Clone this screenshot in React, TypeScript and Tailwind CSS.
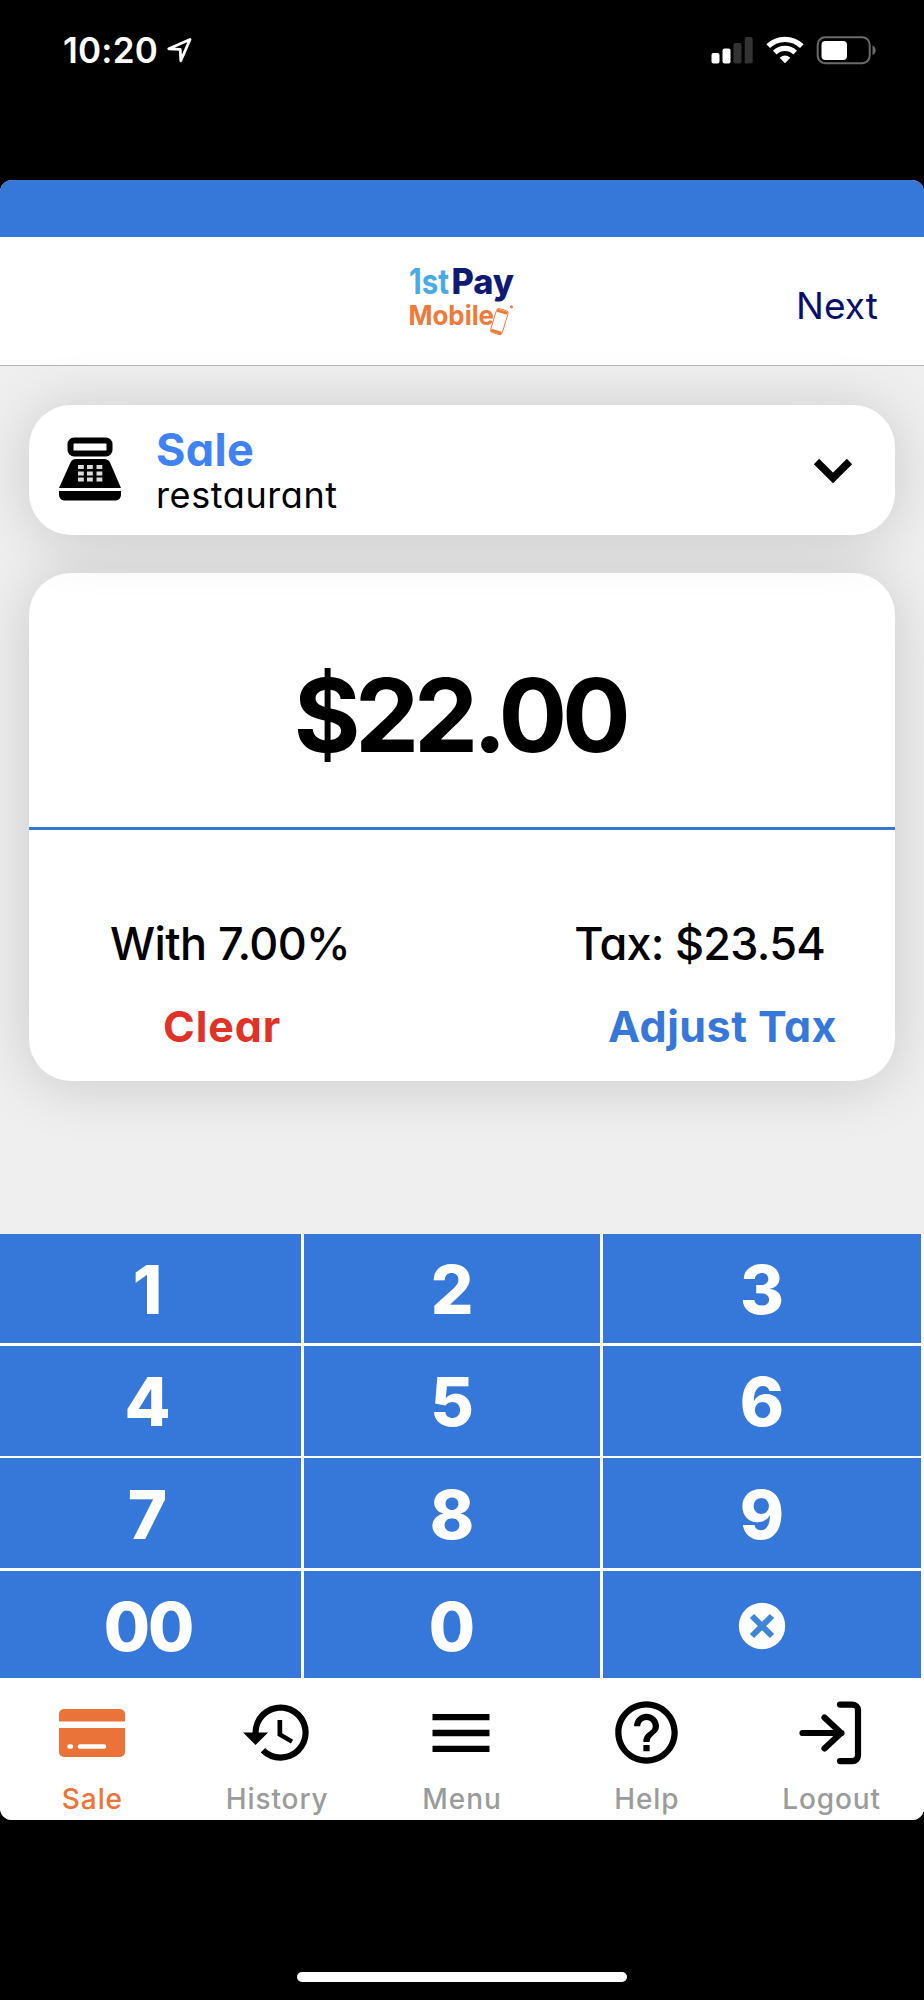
import { MdHelpOutline, MdHistory, MdMenu } from 'react-icons/md';

const StatusBar = () => (
  <div className="flex h-[180px] items-start justify-between pl-[63px] pr-12 text-white">
    <div className="flex items-start pt-[33px]">
      <span className="w-[104px] text-[35px] leading-none font-semibold tracking-[0.2px]">10:20</span>
      <svg className="mt-1" width="26" height="26" viewBox="0 0 26 26" fill="none" stroke="#fff" strokeWidth="2.8" strokeLinejoin="round">
        <path d="M23 2.5 L1.8 11.8 L13.2 12.4 L13.8 23.8 Z" />
      </svg>
    </div>
    <div className="flex items-start pt-[36px]">
      <svg width="42" height="28" viewBox="0 0 42 28">
        <rect x="0.5" y="17" width="8" height="10.5" rx="2" fill="#fff" />
        <rect x="11.5" y="12.5" width="8" height="15" rx="2" fill="#fff" />
        <rect x="22.5" y="7" width="8" height="20.5" rx="2" fill="#333" />
        <rect x="33.7" y="1" width="8" height="26.5" rx="2" fill="#333" />
      </svg>
      <svg className="ml-[13px]" width="38" height="28" viewBox="0 0 38 28" fill="none" stroke="#fff" strokeWidth="5.2">
        <path d="M2.2 10.2 A 24 24 0 0 1 35.8 10.2" />
        <path d="M8.8 16.6 A 14.6 14.6 0 0 1 29.2 16.6" />
        <path d="M13.6 21.8 Q19 17.2 24.4 21.8 L19 27.2 Z" fill="#fff" stroke="none" />
      </svg>
      <svg className="ml-3" width="60" height="29" viewBox="0 0 60 29">
        <rect x="1.7" y="1.2" width="52" height="26" rx="7.5" fill="none" stroke="#6b6b6b" strokeWidth="2" />
        <rect x="5.5" y="5" width="25.5" height="19" rx="4" fill="#fff" />
        <path d="M56.5 9.5 Q59.7 11 59.7 14.3 Q59.7 17.6 56.5 19.1 Z" fill="#6b6b6b" />
      </svg>
    </div>
  </div>
);

const Logo = () => (
  <svg width="112" height="86" viewBox="0 -8 112 86" className="font-['Inter',sans-serif]">
    <text x="3" y="31" fontSize="35" fontWeight="700" fill="#49abe4" textLength="40" lengthAdjust="spacingAndGlyphs">1st</text>
    <text x="45.5" y="31" fontSize="35" fontWeight="800" fill="#0f1a74" textLength="62.5" lengthAdjust="spacingAndGlyphs">Pay</text>
    <text x="2.5" y="62" fontSize="27" fontWeight="700" fill="#ee7a3b" textLength="85.5" lengthAdjust="spacingAndGlyphs">Mobile</text>
    <g transform="rotate(17 93 58)" stroke="#ee7a3b" fill="none">
      <rect x="87.5" y="46" width="12" height="25" rx="2.5" strokeWidth="0.9" />
      <path d="M88.1 48.2h10.8M88.1 69h10.8" strokeWidth="3" />
    </g>
    <circle cx="105.5" cy="43.8" r="1.6" fill="#ee7a3b" />
  </svg>
);

const RegisterIcon = () => (
  <svg className="-mt-0.5" width="64" height="64" viewBox="0 0 64 64">
    <rect x="12.5" y="3.5" width="39" height="13" rx="3.5" fill="#fff" stroke="#000" strokeWidth="6" />
    <path d="M18 22h28c3 0 5 1.5 6 3.5L63 51H1l11.5-25.5C13.5 23.5 15 22 18 22z" />
    <path d="M1 54h62v3c0 4-2 6.5-6 6.5H7c-4 0-6-2.5-6-6.5z" />
    <g fill="#ddd">
      {[28, 34.5, 40.5].map((y) =>
        [20, 29, 38.5].map((x) => <rect key={`${x}-${y}`} x={x} y={y} width="5.8" height="4" />)
      )}
    </g>
  </svg>
);

const CardIcon = () => (
  <svg width="66" height="48" viewBox="0 0 66 48">
    <path d="M5 0h56a5 5 0 0 1 5 5v7.5H0V5a5 5 0 0 1 5-5z" fill="#e97338" />
    <path d="M0 19h66v24a5 5 0 0 1-5 5H5a5 5 0 0 1-5-5z" fill="#e97338" />
    <path d="M10.5 37.5h1.5M21 37.5h24" stroke="#fff" strokeWidth="4.5" strokeLinecap="round" />
  </svg>
);

const LogoutIcon = () => (
  <svg width="64" height="64" viewBox="0 0 64 64" fill="none" stroke="#000" strokeWidth="6.2" strokeLinecap="round" strokeLinejoin="round">
    <path d="M3.5 32h39M25.5 16.5L42 32 25.5 47.5" />
    <path d="M41 3.6H53.5a5.5 5.5 0 0 1 5.5 5.5v45.5a5.5 5.5 0 0 1-5.5 5.5H41" />
  </svg>
);

const DeleteIcon = () => (
  <svg width="48" height="48" viewBox="0 0 48 48">
    <circle cx="24" cy="24" r="23.2" fill="#fff" />
    <path d="M14 14l20 20M34 14l-20 20" stroke="#3c85d8" strokeWidth="6" />
  </svg>
);

const keys = [
  { id: '1', className: 'pr-[6px] pt-0.5' },
  { id: '2', className: 'pt-0.5' },
  { id: '3', className: 'pt-0.5' },
  { id: '4', className: 'pr-[6px] pt-0.5' },
  { id: '5', className: 'pt-0.5' },
  { id: '6', className: 'pt-0.5' },
  { id: '7', className: 'pr-[6px] pt-0.5' },
  { id: '8', className: 'pt-0.5' },
  { id: '9', className: 'pt-0.5' },
  { id: '00', className: 'pr-[5px] pt-1 tracking-[-2px]' },
  { id: '0', className: 'pt-1' },
];

const tabs = [
  { label: 'Sale', icon: <CardIcon /> },
  { label: 'History', icon: <MdHistory size={75} className="translate-x-px" /> },
  { label: 'Menu', icon: <MdMenu size={76} /> },
  { label: 'Help', icon: <MdHelpOutline size={75} /> },
  { label: 'Logout', icon: <LogoutIcon /> },
];

const App = () => {
  return (
    <div className="h-[2000px] w-[924px] overflow-hidden bg-black font-['Inter',sans-serif] text-black">
      <StatusBar />

      <main className="flex h-[1640px] flex-col overflow-hidden rounded-xl bg-[#efefef]">
        <div className="h-[57px] shrink-0 bg-[#3578d9]" />

        {/* Header */}
        <header className="grid h-[129px] shrink-0 grid-cols-[1fr_112px_1fr] items-start border-b border-[#b5b5b5] bg-white">
          <span />
          <div className="pt-[18px]">
            <Logo />
          </div>
          <button className="justify-self-end pr-[46px] pt-[50px] text-[37px] leading-none font-normal tracking-[0.1px] text-[#060f6b]">Next</button>
        </header>

        {/* Transaction type and amount */}
        <section className="flex h-[868px] shrink-0 flex-col gap-[38px] px-[29px] pt-[39px] [font-feature-settings:'cv11']">
          <div className="relative z-10 flex h-[130px] shrink-0 items-center rounded-[42px] bg-white pl-[29px] pr-[42px] shadow-[0_4px_60px_rgba(0,0,0,0.16)]">
            <RegisterIcon />
            <div className="ml-[34px] flex-1 pt-0.5">
              <p className="text-[45px] leading-[48px] font-bold tracking-[0.3px] text-[#3f82f6]">Sale</p>
              <p className="text-[36px] leading-[42px] tracking-[0.6px]">restaurant</p>
            </div>
            <svg width="40" height="28" viewBox="0 0 40 28" fill="none" stroke="#000" strokeWidth="7.5">
              <path d="M3.500 5.500l16.500 16.500 16.500-16.500" />
            </svg>
          </div>

          <div className="h-[508px] shrink-0 rounded-[42px] bg-white shadow-[0_4px_60px_rgba(0,0,0,0.16)]">
            <div className="flex h-[257px] justify-center border-b-3 border-[#3578d9] pt-[91px]">
              <span className="mr-[5px] text-[102px] leading-none font-bold tracking-[-5.4px]">$22.00</span>
            </div>
            <div className="flex justify-between pl-[81px] pr-[70px] pt-[91px] text-[45px] leading-none font-medium">
              <span className="tracking-[-0.6px]">With 7.00%</span>
              <span className="tracking-[-0.75px]">Tax: $23.54</span>
            </div>
            <div className="flex justify-between pl-[134px] pr-[58px] pt-[39px] text-[43px] leading-none font-bold">
              <button className="tracking-[0.9px] text-[#e03226]">Clear</button>
              <button className="tracking-[0.5px] text-[#3578d9]">Adjust Tax</button>
            </div>
          </div>
        </section>

        {/* Keypad */}
        <section className="grid h-[444px] shrink-0 grid-cols-[301px_296px_318px] grid-rows-[109px_110px_110px_107px] gap-x-[3px] gap-y-[2.67px] bg-white text-[67px] leading-none font-extrabold text-white">
          {keys.map((key) => (
            <button key={key.id} className={`flex items-center justify-center bg-[#3578d9] ${key.className}`}>
              {key.id}
            </button>
          ))}
          <button className="flex items-center justify-center bg-[#3578d9] pt-1">
            <DeleteIcon />
          </button>
        </section>

        {/* Tab bar */}
        <nav className="grid h-[142px] shrink-0 grid-cols-5 bg-white">
          {tabs.map((tab, i) => (
            <div key={tab.label} className="flex flex-col items-center">
              <div className="flex h-[109px] items-center justify-center pr-px">{tab.icon}</div>
              <span
                className={
                  i === 0
                    ? '-mt-[2px] text-[28px] leading-none font-medium tracking-[0.9px] text-[#ec7438]'
                    : '-mt-[2px] text-[28px] leading-none font-medium tracking-[0.9px] text-[#9b9b9b]'
                }
              >
                {tab.label}
              </span>
            </div>
          ))}
        </nav>
      </main>

      <div className="mx-auto mt-[152px] h-2.5 w-[330px] rounded-full bg-white" />
    </div>
  );
};

export default App;
